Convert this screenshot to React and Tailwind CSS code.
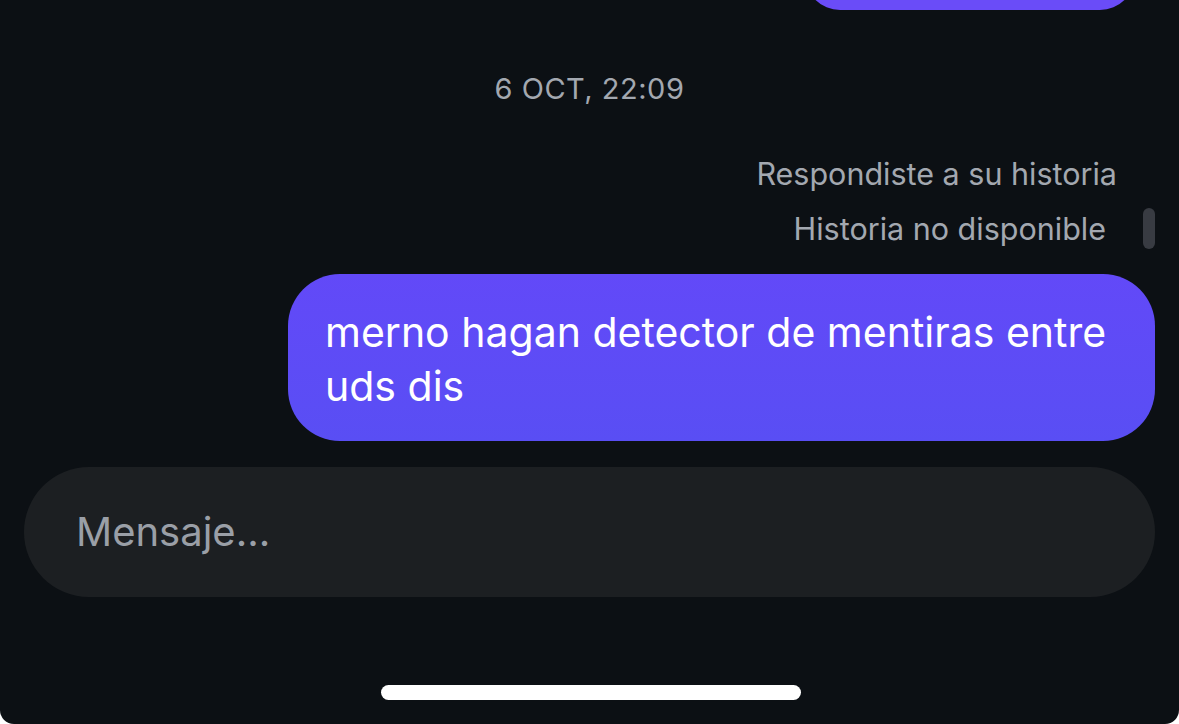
export default function App() {
  const font = { fontFamily: 'Inter, "Noto Sans", sans-serif' };
  return (
    <div className="w-[1179px] h-[724px] bg-white overflow-hidden" style={font}>
      <div className="relative w-full h-full bg-[#0c1014] rounded-b-[14px] overflow-hidden flex flex-col">
        {/* top bubble remnant */}
        <div className="flex justify-end pr-[44px] -mt-[60px]">
          <div className="w-[330px] h-[70px] rounded-[35px] bg-[#6a4cf8]" />
        </div>
        {/* date */}
        <div className="mt-[60px] h-[38px] flex items-center justify-center text-[29px] text-[#a3a8b0] tracking-[0.5px]">
          6 OCT, 22:09
        </div>
        {/* replied to story */}
        <div className="mt-[48px] flex flex-col items-end pr-[62px] text-[30.5px] text-[#a3a8b0]">
          <div className="h-[36px] flex items-center">Respondiste a su historia</div>
          <div className="mt-[19px] h-[36px] flex items-center pr-[11px]">Historia no disponible</div>
        </div>
        <div className="absolute left-[1143px] top-[208px] w-[12px] h-[41px] rounded-full bg-[#383b42]" />
        {/* bubble */}
        <div className="mt-[27px] flex justify-end pr-[24px]">
          <div className="w-[867px] h-[167px] rounded-[52px] bg-gradient-to-b from-[#6249f8] to-[#594ef4] pl-[37px] pr-[30px] pt-[31px] text-white text-[41px] leading-[54px]">
            merno hagan detector de mentiras entre uds dis
          </div>
        </div>
        {/* input */}
        <div className="mt-[26px] px-[24px]">
          <div className="h-[130px] rounded-[65px] bg-[#1c1f22] flex items-center pl-[52px] text-[40px] text-[#9a9fa7]">
            Mensaje...
          </div>
        </div>
        {/* home indicator */}
        <div className="mt-[88px] flex justify-center">
          <div className="ml-[2px] w-[420px] h-[15px] rounded-full bg-white" />
        </div>
      </div>
    </div>
  );
}
